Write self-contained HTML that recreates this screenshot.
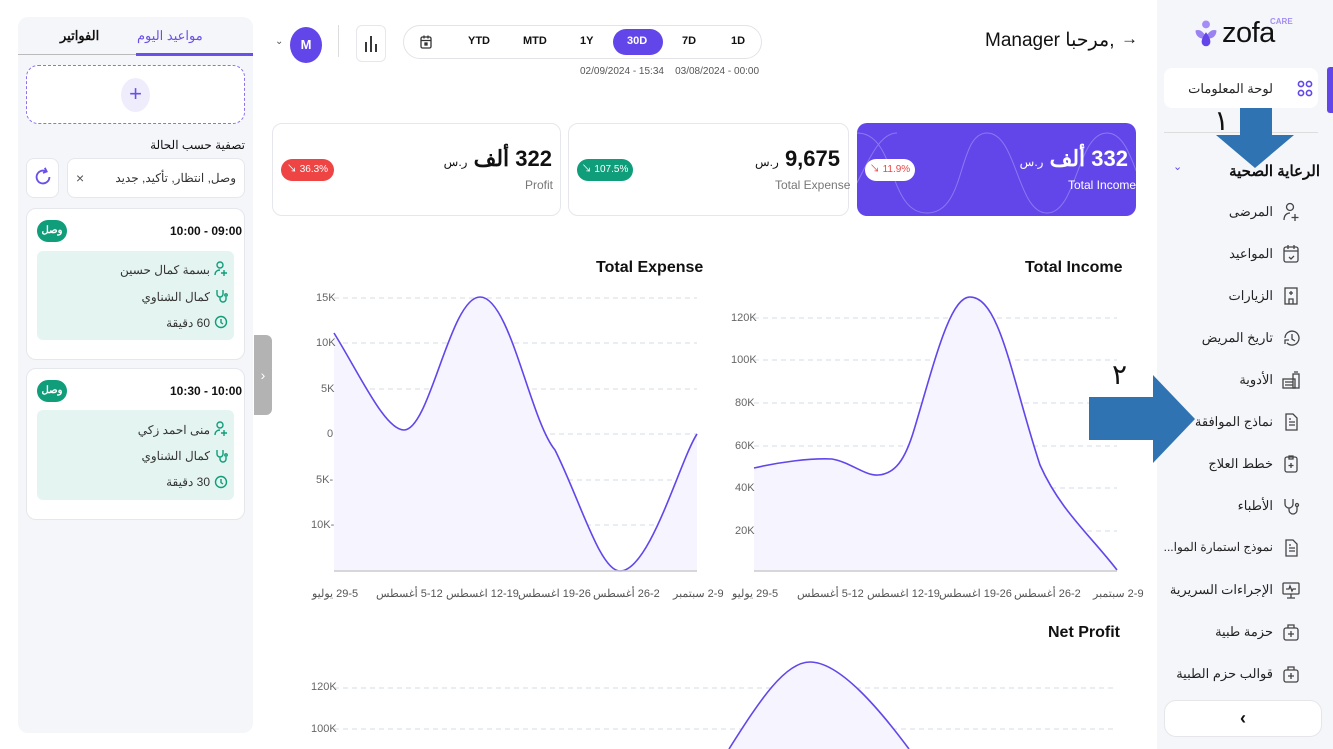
<!DOCTYPE html>
<html dir="ltr"><head><meta charset="utf-8"><style>
*{box-sizing:border-box;margin:0;padding:0}
html,body{direction:ltr}
body{width:1333px;height:749px;overflow:hidden;background:#fff;font-family:"Liberation Sans","Noto Sans CJK SC",sans-serif;position:relative;color:#111}
.a{position:absolute}
.r{direction:rtl;text-align:right}
.bo{direction:ltr;unicode-bidi:bidi-override;white-space:nowrap}
.side{left:1157px;top:0;width:176px;height:749px;background:#f5f6fa}
.nav{position:absolute;right:60px;font-size:13px;color:#222;direction:rtl;white-space:nowrap}
.card{background:#fff;border:1px solid #e6e7ec;border-radius:10px}
.pill{position:absolute;height:22px;border-radius:11px;font-size:10px;color:#fff;line-height:22px;text-align:center;direction:ltr}
.ax{font-size:11px;color:#666;position:absolute}
.xl{font-size:11px;color:#555;position:absolute;white-space:nowrap;direction:rtl}
.val{position:absolute;direction:rtl;text-align:right;font-size:22px;font-weight:bold;white-space:nowrap}
.val span{font-size:12px;font-weight:normal}
</style></head><body>

<!-- left panel -->
<div class="a" style="left:18px;top:17px;width:235px;height:716px;background:#f5f6fa;border-radius:10px"></div>
<div class="a" style="left:137px;top:28px;font-size:13px;color:#6a4fe8">مواعيد اليوم</div>
<div class="a" style="left:60px;top:28px;font-size:13px;font-weight:bold">الفواتير</div>
<div class="a" style="left:18px;top:54px;width:235px;height:1px;background:#bbb"></div>
<div class="a" style="left:136px;top:53px;width:117px;height:3px;background:#6a4fe8"></div>
<div class="a" style="left:26px;top:65px;width:219px;height:59px;border:1.5px dashed #8c72ee;border-radius:12px;background:#fff"></div>
<div class="a" style="left:121px;top:78px;width:29px;height:34px;border-radius:50%;background:#efedfc;color:#6a4fe8;font-size:22px;text-align:center;line-height:32px">+</div>
<div class="a r" style="left:100px;top:138px;width:145px;font-size:12px">تصفية حسب الحالة</div>
<div class="a card" style="left:26px;top:158px;width:33px;height:40px;border-radius:8px"></div>
<svg class="a" style="left:32px;top:166px" width="22" height="22" viewBox="0 0 24 24" fill="none" stroke="#6a4fe8" stroke-width="2"><path d="M19 12a7 7 0 1 1-4-6.3"/><path d="M14 2l2 4-4 1.5"/></svg>
<div class="a card" style="left:67px;top:158px;width:178px;height:40px;border-radius:8px"></div>
<div class="a" style="left:76px;top:170px;font-size:14px;color:#555">×</div>
<div class="a r" style="left:100px;top:171px;width:136px;font-size:12px;color:#333">وصل, انتظار, تأكيد, جديد</div>

<div class="a card" style="left:26px;top:208px;width:219px;height:152px"></div>
<div class="a bo" style="left:170px;top:224px;font-size:12px;font-weight:bold">10:00 - 09:00</div>
<div class="pill" style="left:37px;top:220px;width:30px;background:#0f9d7a;font-weight:bold">وصل</div>
<div class="a" style="left:37px;top:251px;width:197px;height:89px;background:#e4f5f1;border-radius:6px"></div>
<div class="a r" style="left:60px;top:263px;width:150px;font-size:12px;color:#333">بسمة كمال حسين</div>
<div class="a r" style="left:60px;top:290px;width:150px;font-size:12px;color:#333">كمال الشناوي</div>
<div class="a r" style="left:60px;top:316px;width:150px;font-size:12px;color:#333">60 دقيقة</div>
<div class="a card" style="left:26px;top:368px;width:219px;height:152px"></div>
<div class="a bo" style="left:170px;top:384px;font-size:12px;font-weight:bold">10:30 - 10:00</div>
<div class="pill" style="left:37px;top:380px;width:30px;background:#0f9d7a;font-weight:bold">وصل</div>
<div class="a" style="left:37px;top:410px;width:197px;height:90px;background:#e4f5f1;border-radius:6px"></div>
<div class="a r" style="left:60px;top:423px;width:150px;font-size:12px;color:#333">منى احمد زكي</div>
<div class="a r" style="left:60px;top:449px;width:150px;font-size:12px;color:#333">كمال الشناوي</div>
<div class="a r" style="left:60px;top:475px;width:150px;font-size:12px;color:#333">30 دقيقة</div>
<svg class="a" style="left:213px;top:260px" width="16" height="240" viewBox="0 0 16 240" fill="none" stroke="#0f9d7a" stroke-width="1.4">
<circle cx="7" cy="5" r="3"/><path d="M2 15c0-4 3-5 5-5M11 10v6M8 13h6"/>
<path d="M4 30v4a3 3 0 0 0 6 0v-4M7 37v2a3 3 0 0 0 6 0v-2"/><circle cx="13" cy="35" r="1.2"/>
<circle cx="8" cy="62" r="5.5"/><path d="M8 59v3.5l2 1.5"/>
<g transform="translate(0,160)"><circle cx="7" cy="5" r="3"/><path d="M2 15c0-4 3-5 5-5M11 10v6M8 13h6"/>
<path d="M4 30v4a3 3 0 0 0 6 0v-4M7 37v2a3 3 0 0 0 6 0v-2"/><circle cx="13" cy="35" r="1.2"/>
<circle cx="8" cy="62" r="5.5"/><path d="M8 59v3.5l2 1.5"/></g></svg>
<div class="a" style="left:254px;top:335px;width:18px;height:80px;background:#b3b3b3;border-radius:0 6px 6px 0;color:#fff;font-size:14px;text-align:center;line-height:80px">›</div>

<!-- top bar -->
<div class="a" style="left:275px;top:36px;font-size:10px;color:#555">⌄</div>
<div class="a" style="left:290px;top:27px;width:32px;height:36px;border-radius:50%;background:#6246ea;color:#fff;font-weight:bold;font-size:13px;text-align:center;line-height:36px">M</div>
<div class="a" style="left:338px;top:25px;width:1px;height:32px;background:#ddd"></div>
<div class="a card" style="left:356px;top:25px;width:30px;height:37px;border-radius:6px"></div>
<svg class="a" style="left:363px;top:34px" width="16" height="18"><path d="M3 8v10M8 2v16M13 10v8" stroke="#222" stroke-width="1.8"/></svg>
<div class="a" style="left:403px;top:25px;width:359px;height:34px;border:1px solid #e3e3e8;border-radius:17px"></div>
<svg class="a" style="left:420px;top:35px" width="12" height="14" viewBox="0 0 12 14" fill="none" stroke="#333" stroke-width="1.3"><rect x="1" y="2" width="10" height="11" rx="1.5"/><path d="M1 5.5h10M4 0.5v3M8 0.5v3"/><rect x="5" y="8" width="2" height="2" fill="#333"/></svg>
<div class="a" style="left:613px;top:29px;width:50px;height:26px;border-radius:13px;background:#6246ea"></div>
<div class="a" style="top:35px;left:0;font-size:11px;font-weight:bold;width:0">
<span class="a" style="left:468px">YTD</span><span class="a" style="left:523px">MTD</span><span class="a" style="left:580px">1Y</span><span class="a" style="left:627px;color:#fff">30D</span><span class="a" style="left:682px">7D</span><span class="a" style="left:731px">1D</span></div>
<div class="a bo" style="left:580px;top:66px;font-size:10px;color:#555">02/09/2024 - 15:34 &nbsp;&nbsp;&nbsp;03/08/2024 - 00:00</div>
<div class="a" style="left:985px;top:29px;font-size:19px;white-space:nowrap">Manager <span dir="rtl">,مرحبا</span></div>
<div class="a" style="left:1121px;top:29px;font-size:17px">→</div>

<!-- stat cards -->
<div class="a card" style="left:272px;top:123px;width:289px;height:93px"></div>
<div class="val" style="right:781px;top:146px">322 ألف <span>ر.س</span></div>
<div class="a" style="left:525px;top:178px;font-size:12px;color:#777">Profit</div>
<div class="pill" style="left:281px;top:159px;width:53px;background:#ef4444">↘ 36.3%</div>
<div class="a card" style="left:568px;top:123px;width:281px;height:93px"></div>
<div class="val" style="right:493px;top:146px">9,675 <span>ر.س</span></div>
<div class="a" style="left:775px;top:178px;font-size:12px;color:#777">Total Expense</div>
<div class="pill" style="left:577px;top:159px;width:56px;background:#0f9d7a">↘ 107.5%</div>
<div class="a" style="left:857px;top:123px;width:279px;height:93px;background:#6246ea;border-radius:10px;overflow:hidden">
<svg width="279" height="93" fill="none" stroke="#8c79f2" stroke-width="1"><path d="M0 10c40 0 30 80 70 80s30-80 60-80 30 80 60 80 30-80 60-80 30 80 60 80"/><path d="M-30 90c30 0 40-80 70-80"/></svg></div>
<div class="val" style="right:205px;top:146px;color:#fff">332 ألف <span>ر.س</span></div>
<div class="a" style="left:1068px;top:178px;font-size:12px;color:#fff">Total Income</div>
<div class="pill" style="left:865px;top:159px;width:50px;background:#fff;color:#ef4444">↘ 11.9%</div>

<!-- charts -->
<svg class="a" style="left:0;top:0" width="1150" height="749">
<g stroke="#d5dde3" stroke-dasharray="5,4" stroke-width="1">
<path d="M334 298H697M334 343H697M334 389H697M334 434H697M334 480H697M334 525H697"/>
<path d="M754 318H1117M754 360H1117M754 403H1117M754 446H1117M754 488H1117M754 531H1117"/>
<path d="M334 688H1117M334 729H1117"/></g>
<path d="M334 333C360 375 385 430 404 430C430 430 450 297 480 297C510 297 530 420 555 450C580 500 600 571 620 571C650 571 680 460 697 434V571H334Z" fill="#f6f4fe"/>
<path d="M334 333C360 375 385 430 404 430C430 430 450 297 480 297C510 297 530 420 555 450C580 500 600 571 620 571C650 571 680 460 697 434" fill="none" stroke="#6246ea" stroke-width="1.6"/>
<path d="M754 468C780 462 810 458 832 459C850 462 865 476 878 475C895 474 905 460 914 430C935 360 950 297 970 297C1000 297 1012 380 1040 465C1060 510 1090 535 1117 570V571H754Z" fill="#f6f4fe"/>
<path d="M754 468C780 462 810 458 832 459C850 462 865 476 878 475C895 474 905 460 914 430C935 360 950 297 970 297C1000 297 1012 380 1040 465C1060 510 1090 535 1117 570" fill="none" stroke="#6246ea" stroke-width="1.6"/>
<path d="M729 749C760 700 785 662 810 662C840 662 880 710 909 749Z" fill="#f6f4fe"/>
<path d="M729 749C760 700 785 662 810 662C840 662 880 710 909 749" fill="none" stroke="#6246ea" stroke-width="1.6"/>
<path d="M334 571H697M754 571H1117" stroke="#ccc" stroke-width="1.5"/>
</svg>
<div class="a" style="left:596px;top:259px;font-size:16px;font-weight:bold">Total Expense</div>
<div class="a" style="left:1025px;top:259px;font-size:16px;font-weight:bold">Total Income</div>
<div class="a" style="left:1048px;top:624px;font-size:16px;font-weight:bold">Net Profit</div>
<div class="ax" style="left:316px;top:292px">15K</div><div class="ax" style="left:316px;top:337px">10K</div><div class="ax" style="left:321px;top:383px">5K</div><div class="ax" style="left:327px;top:428px">0</div><div class="ax" style="left:316px;top:474px">5K-</div><div class="ax" style="left:311px;top:519px">10K-</div>
<div class="ax" style="left:731px;top:312px">120K</div><div class="ax" style="left:731px;top:354px">100K</div><div class="ax" style="left:735px;top:397px">80K</div><div class="ax" style="left:735px;top:440px">60K</div><div class="ax" style="left:735px;top:482px">40K</div><div class="ax" style="left:735px;top:525px">20K</div>
<div class="ax" style="left:311px;top:681px">120K</div><div class="ax" style="left:311px;top:723px">100K</div>
<div class="xl" style="left:312px;top:587px">29-5 يوليو</div><div class="xl" style="left:376px;top:587px">5-12 أغسطس</div><div class="xl" style="left:446px;top:587px">12-19 اغسطس</div><div class="xl" style="left:518px;top:587px">19-26 اغسطس</div><div class="xl" style="left:593px;top:587px">26-2 أغسطس</div><div class="xl" style="left:673px;top:587px">2-9 سبتمبر</div>
<div class="xl" style="left:732px;top:587px">29-5 يوليو</div><div class="xl" style="left:797px;top:587px">5-12 أغسطس</div><div class="xl" style="left:867px;top:587px">12-19 اغسطس</div><div class="xl" style="left:939px;top:587px">19-26 اغسطس</div><div class="xl" style="left:1014px;top:587px">26-2 أغسطس</div><div class="xl" style="left:1093px;top:587px">2-9 سبتمبر</div>

<!-- sidebar -->
<div class="a side"></div>
<svg class="a" style="left:1193px;top:20px" width="26" height="28" viewBox="0 0 28 32"><circle cx="14" cy="5" r="4.5" fill="#a48ef5"/><path d="M2 12c5-2 10 2 12 8-4 3-12 0-12-8z" fill="#9b82f3"/><path d="M26 12c-5-2-10 2-12 8 4 3 12 0 12-8z" fill="#9b82f3"/><path d="M14 14c-4 5-5 9-5 11a5 5 0 0 0 10 0c0-2-1-6-5-11z" fill="#6246ea"/></svg>
<div class="a" style="left:1222px;top:17px;font-size:29px;color:#111;letter-spacing:-0.5px">zofa</div>
<div class="a" style="left:1270px;top:17px;font-size:8px;font-weight:bold;color:#a48ef5">CARE</div>
<div class="a" style="left:1164px;top:68px;width:154px;height:40px;background:#fff;border-radius:8px"></div>
<div class="a" style="left:1327px;top:67px;width:6px;height:46px;background:#6246ea;border-radius:3px 0 0 3px"></div>
<div class="nav" style="top:81px">لوحة المعلومات</div>
<svg class="a" style="left:1297px;top:80px" width="16" height="17" fill="none" stroke="#6246ea" stroke-width="1.6"><circle cx="4" cy="4" r="2.6"/><circle cx="12" cy="4" r="2.6"/><circle cx="4" cy="13" r="2.6"/><circle cx="12" cy="13" r="2.6"/></svg>
<div class="a" style="left:1164px;top:132px;width:154px;height:1px;background:#ddd"></div>
<div class="a r" style="left:1210px;top:162px;width:110px;font-size:15px;font-weight:bold;white-space:nowrap">الرعاية الصحية</div>
<div class="a" style="left:1173px;top:160px;font-size:11px;color:#6246ea">⌄</div>
<div class="nav" style="top:204px">المرضى</div>
<div class="nav" style="top:246px">المواعيد</div>
<div class="nav" style="top:288px">الزيارات</div>
<div class="nav" style="top:330px">تاريخ المريض</div>
<div class="nav" style="top:372px">الأدوية</div>
<div class="nav" style="top:414px">نماذج الموافقة</div>
<div class="nav" style="top:456px">خطط العلاج</div>
<div class="nav" style="top:498px">الأطباء</div>
<div class="nav" style="top:540px;font-size:12px">نموذج استمارة الموا...</div>
<div class="nav" style="top:582px">الإجراءات السريرية</div>
<div class="nav" style="top:624px">حزمة طبية</div>
<div class="nav" style="top:666px">قوالب حزم الطبية</div>
<svg class="a" style="left:1281px;top:202px" width="20" height="490" viewBox="0 0 20 490" fill="none" stroke="#444" stroke-width="1.3">
<circle cx="9" cy="5" r="3.5"/><path d="M3 18c0-5 3-7 6-7M14 12v7M10.5 15.5h7"/>
<g transform="translate(0,42)"><rect x="3" y="3" width="14" height="15" rx="2"/><path d="M3 7h14M7 1v4M13 1v4M8 13l2 2 3-3"/></g>
<g transform="translate(0,84)"><rect x="4" y="2" width="12" height="16"/><path d="M10 5v4M8 7h4M8 18v-5h4v5"/></g>
<g transform="translate(0,126)"><path d="M4 10a7 7 0 1 1 2 5M4 16v-4h4M11 6v5l3 2"/></g>
<g transform="translate(0,168)"><rect x="2" y="9" width="12" height="9"/><rect x="12" y="4" width="6" height="14"/><path d="M13 2h4M4 12h8M4 15h8"/></g>
<g transform="translate(0,210)"><path d="M5 2h7l4 4v12H5z M8 10h6M8 13h6M8 7h2"/></g>
<g transform="translate(0,252)"><rect x="4" y="3" width="12" height="15" rx="2"/><path d="M8 2h4v3H8zM10 9v5M7.5 11.5h5"/></g>
<g transform="translate(0,294)"><path d="M4 3v5a4 4 0 0 0 8 0V3M8 12v2a4 4 0 0 0 8 0v-3"/><circle cx="16" cy="9" r="1.5"/></g>
<g transform="translate(0,336)"><path d="M5 2h7l4 4v12H5z M8 10h6M8 13h6M8 7h2"/></g>
<g transform="translate(0,378)"><rect x="2" y="3" width="16" height="11" rx="1"/><path d="M10 14v4M6 18h8M5 9h3l1-3 2 5 1-2h3"/></g>
<g transform="translate(0,420)"><rect x="3" y="6" width="14" height="12" rx="2"/><path d="M7 6V3h6v3M10 9v6M7 12h6"/></g>
<g transform="translate(0,462)"><rect x="3" y="6" width="14" height="12" rx="2"/><path d="M7 6V3h6v3M10 9v6M7 12h6"/></g>
</svg>
<div class="a" style="left:1164px;top:700px;width:158px;height:37px;background:#fff;border:1px solid #e6e6ea;border-radius:12px;text-align:center;font-size:18px;line-height:34px;font-weight:bold">‹</div>

<!-- annotation arrows -->
<svg class="a" style="left:0;top:0" width="1333" height="749">
<path d="M1240 108H1272V135H1294L1255 168L1216 135H1240Z" fill="#2f73b3"/>
<path d="M1089 397H1153V375L1195 419L1153 463V440H1089Z" fill="#2f73b3"/>
</svg>
<div class="a" style="left:1214px;top:104px;font-size:28px;font-family:'Liberation Serif',serif">١</div>
<div class="a" style="left:1112px;top:358px;font-size:28px;font-family:'Liberation Serif',serif">٢</div>
</body></html>
